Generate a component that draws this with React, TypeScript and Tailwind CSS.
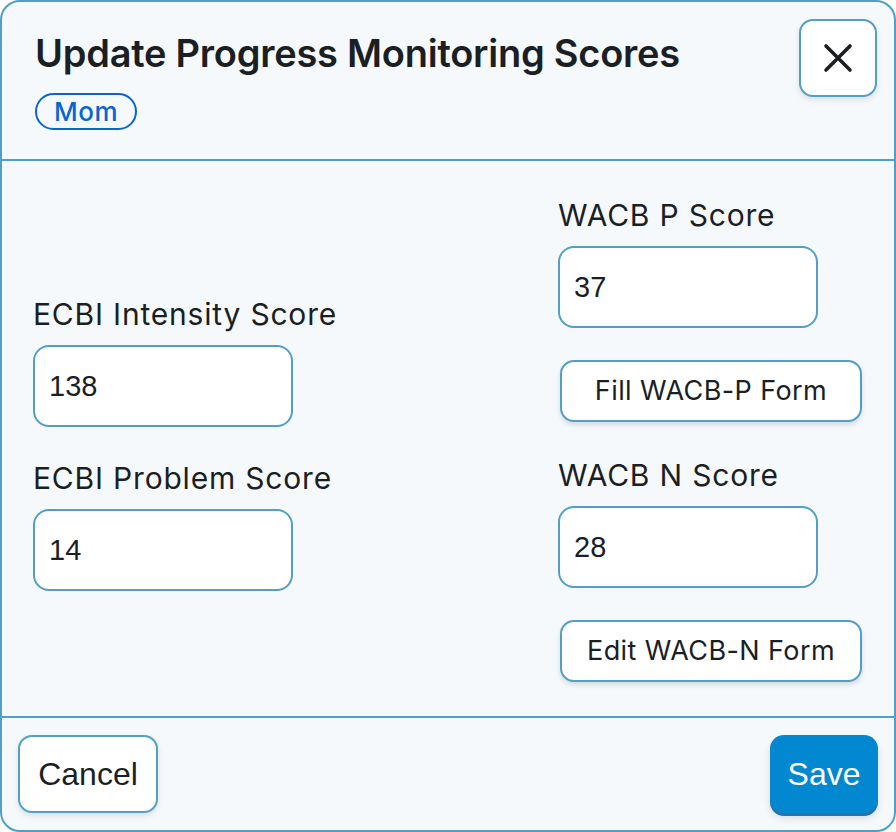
import React from 'react';

const ScoreField = ({ label, value }: { label: string; value: string }) => (
  <div className="flex flex-col">
    <label className="text-[30px] leading-[40px] tracking-[0.8px] text-[#1b1f24]">{label}</label>
    <input
      defaultValue={value}
      className="mt-[11px] w-[260px] h-[82px] rounded-[16px] border-2 border-[#529fc6] bg-white px-[14px] text-[29px] text-[#1b1f24] outline-none font-['Liberation_Sans',sans-serif]"
    />
  </div>
);

const FormButton = ({ children }: { children: React.ReactNode }) => (
  <button
    type="button"
    className="ml-[2px] mt-[32px] w-[302px] h-[62px] rounded-[14px] border-2 border-[#529fc6] bg-white text-[27px] tracking-[0.4px] text-[#1b1f24] shadow-[0_3px_5px_rgba(0,0,0,0.12)]"
  >
    {children}
  </button>
);

export default function App() {
  return (
    <div className="w-[896px] h-[832px] font-['Inter',sans-serif]">
      <div className="w-full h-full flex flex-col border-2 border-[#529fc6] rounded-[20px] bg-[#f5f9fc] overflow-hidden">
        {/* Encabezado */}
        <div className="h-[159px] flex justify-between pl-[33px] pr-[17px] pt-[17px] border-b-2 border-[#529fc6]">
          <div className="flex flex-col items-start pt-[10px]">
            <h2 className="text-[38px] leading-[48px] font-semibold text-[#1b1f24] tracking-[-0.25px]">
              Update Progress Monitoring Scores
            </h2>
            <span className="mt-[16px] h-[37px] px-[17px] flex items-center rounded-full border-2 border-[#0a66cc] text-[26px] font-medium tracking-[0.5px] text-[#0a66cc]">
              Mom
            </span>
          </div>
          <button
            type="button"
            className="w-[78px] h-[78px] rounded-[14px] border-2 border-[#529fc6] bg-white flex items-center justify-center shadow-[0_3px_6px_rgba(0,0,0,0.1)]"
          >
            <svg width="30" height="30" viewBox="0 0 30 30" fill="none" stroke="#1b1f24" strokeWidth="3.6" strokeLinecap="round">
              <path d="M3 3L27 27M27 3L3 27" />
            </svg>
          </button>
        </div>

        {/* Campos */}
        <div className="flex-1 flex items-center justify-between pl-[31px] pr-[32px] border-b-2 border-[#529fc6]">
          <div className="flex flex-col gap-[31px] pt-[8px]">
            <ScoreField label="ECBI Intensity Score" value="138" />
            <ScoreField label="ECBI Problem Score" value="14" />
          </div>
          <div className="flex flex-col w-[304px]">
            <ScoreField label="WACB P Score" value="37" />
            <FormButton>Fill WACB-P Form</FormButton>
            <div className="mt-[33px]">
              <ScoreField label="WACB N Score" value="28" />
            </div>
            <FormButton>Edit WACB-N Form</FormButton>
          </div>
        </div>

        {/* Pie */}
        <div className="h-[112px] flex items-center justify-between px-[16px] font-['Liberation_Sans',sans-serif]">
          <button
            type="button"
            className="w-[140px] h-[78px] rounded-[14px] border-2 border-[#529fc6] bg-white text-[32px] text-[#1b1f24] shadow-[0_3px_6px_rgba(0,0,0,0.1)]"
          >
            Cancel
          </button>
          <button
            type="button"
            className="w-[108px] h-[78px] rounded-[14px] bg-[#0288d1] text-[32px] text-white shadow-[0_3px_0_#2a6fb0,0_5px_8px_rgba(0,0,0,0.12)]"
          >
            Save
          </button>
        </div>
      </div>
    </div>
  );
}
